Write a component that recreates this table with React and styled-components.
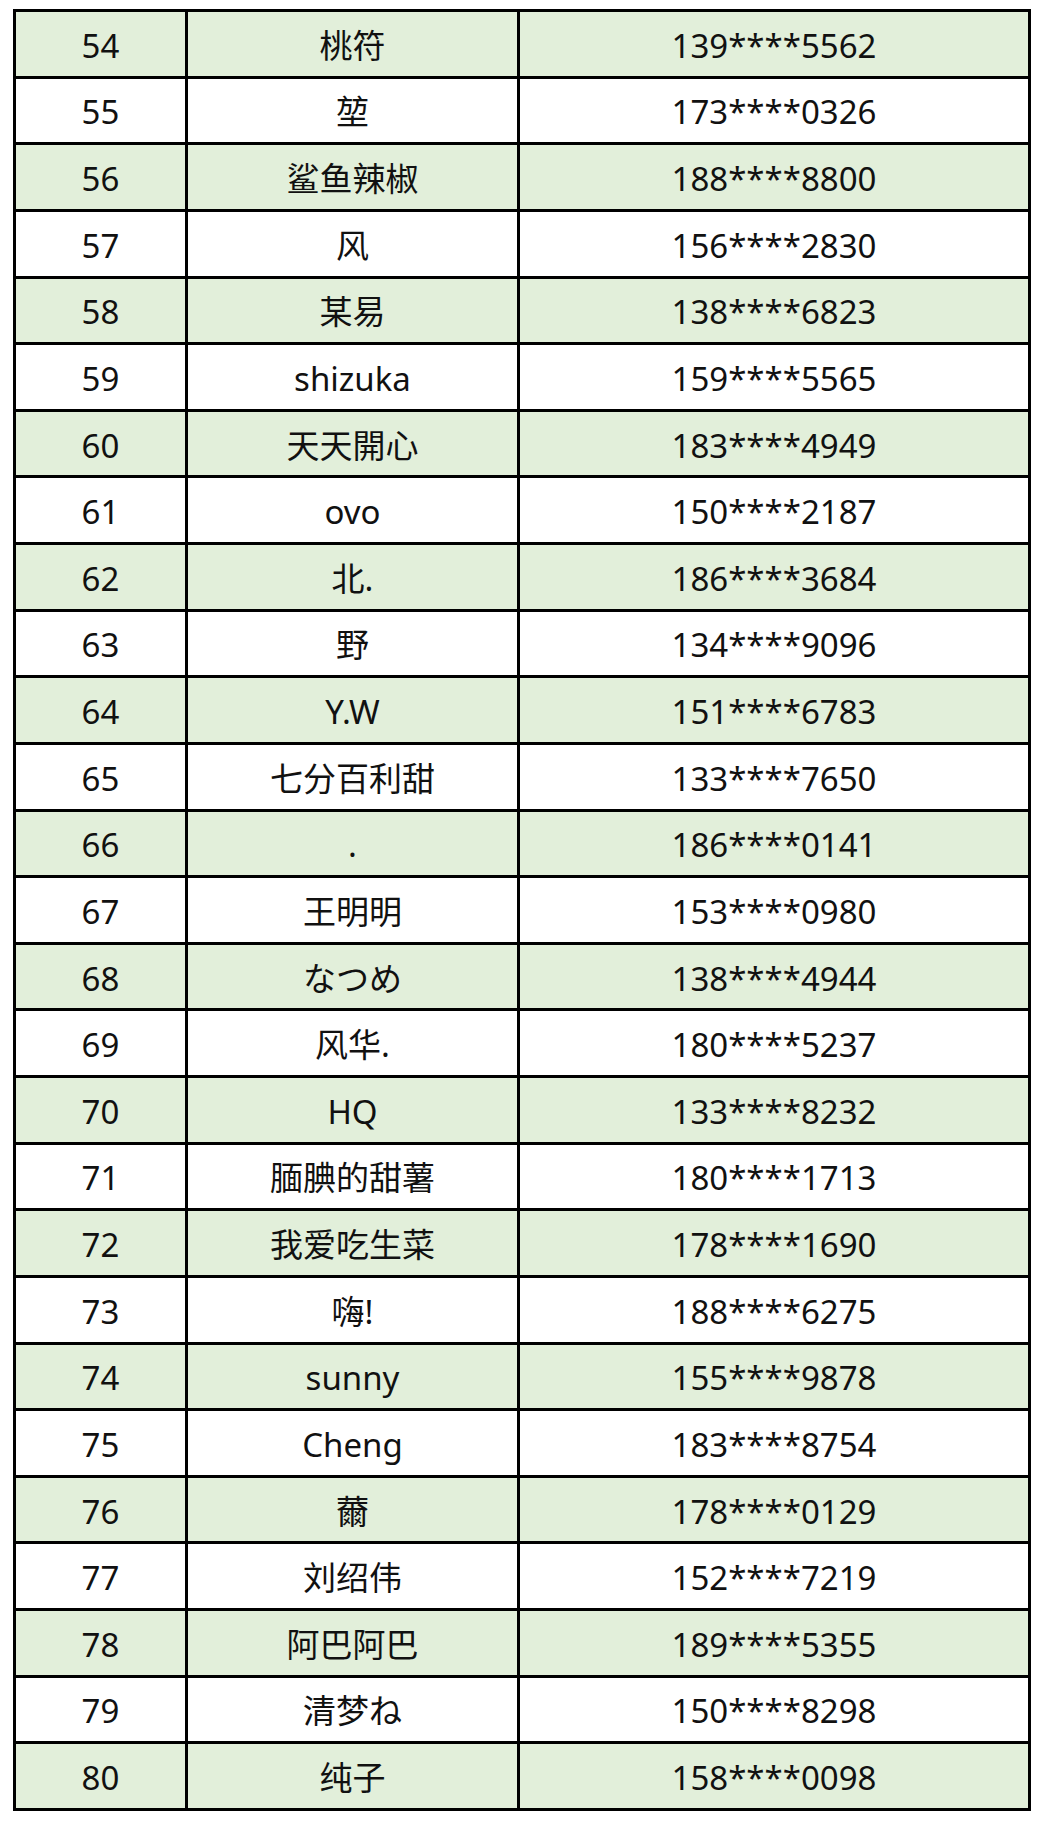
import React from 'react';
import styled, { createGlobalStyle } from 'styled-components';

const GlobalStyle = createGlobalStyle`
  html, body {
    margin: 0;
    padding: 0;
    background: #ffffff;
  }
`;

const Page = styled.div`
  padding: 9px 12px 14px 13px;
  font-family: "Noto Sans", "Noto Sans CJK SC", sans-serif;
  color: #111;
`;

const Table = styled.div`
  width: 1018px;
  display: flex;
  flex-direction: column;
  gap: 3px;
  padding: 3px;
  box-sizing: border-box;
  background: #000;
`;

const Row = styled.div`
  display: grid;
  grid-template-columns: 169px 329px 508px;
  gap: 3px;
  height: 63.63px;
`;

const Cell = styled.div`
  display: flex;
  align-items: center;
  justify-content: center;
  padding-top: 3px;
  box-sizing: border-box;
  background: ${props => (props.$shaded ? '#e2efda' : '#ffffff')};
  font-size: 33px;
  line-height: 1;
  white-space: nowrap;
`;

const rows = [
  [54, '桃符', '139****5562'],
  [55, '堃', '173****0326'],
  [56, '鲨鱼辣椒', '188****8800'],
  [57, '风', '156****2830'],
  [58, '某易', '138****6823'],
  [59, 'shizuka', '159****5565'],
  [60, '天天開心', '183****4949'],
  [61, 'ovo', '150****2187'],
  [62, '北.', '186****3684'],
  [63, '野', '134****9096'],
  [64, 'Y.W', '151****6783'],
  [65, '七分百利甜', '133****7650'],
  [66, '.', '186****0141'],
  [67, '王明明', '153****0980'],
  [68, 'なつめ', '138****4944'],
  [69, '风华.', '180****5237'],
  [70, 'HQ', '133****8232'],
  [71, '腼腆的甜薯', '180****1713'],
  [72, '我爱吃生菜', '178****1690'],
  [73, '嗨!', '188****6275'],
  [74, 'sunny', '155****9878'],
  [75, 'Cheng', '183****8754'],
  [76, '薾', '178****0129'],
  [77, '刘绍伟', '152****7219'],
  [78, '阿巴阿巴', '189****5355'],
  [79, '清梦ね', '150****8298'],
  [80, '纯子', '158****0098'],
];

const App = () => {
  return (
    <Page>
      <GlobalStyle />
      <Table>
        {rows.map(([no, name, phone]) => {
          const shaded = no % 2 === 0;
          return (
            <Row key={no}>
              <Cell $shaded={shaded}>{no}</Cell>
              <Cell $shaded={shaded}>{name}</Cell>
              <Cell $shaded={shaded}>{phone}</Cell>
            </Row>
          );
        })}
      </Table>
    </Page>
  );
};

export default App;
